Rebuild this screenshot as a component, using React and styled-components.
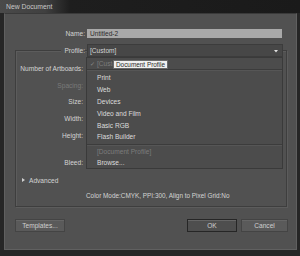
import React from 'react';
import styled, { createGlobalStyle } from 'styled-components';

const GlobalStyle = createGlobalStyle`
  html, body {
    margin: 0;
    padding: 0;
    background: #1e1e1e;
  }
  body {
    font-family: "Liberation Sans", Arial, sans-serif;
  }
`;

const Window = styled.div`
  width: 300px;
  height: 256px;
  background: #262626;
  display: flex;
  flex-direction: column;
  overflow: hidden;
  position: relative;
`;

const TitleBar = styled.div`
  height: 13px;
  flex: none;
  display: flex;
  align-items: center;
  padding-left: 6px;
  background: linear-gradient(90deg, #4a4a4a 0px, #404040 45px, #1e1e1e 70px, #1a1a1a 100%);
  color: #c8c8c8;
  font-size: 6.8px;
`;

const Body = styled.div`
  flex: 1;
  margin: 0 3px 6px 4px;
  background: #515151;
  border: 1px solid #606060;
  border-top-color: #3a3a3a;
  display: flex;
  flex-direction: column;
`;

const Label = styled.div`
  width: ${(p) => p.$width}px;
  flex: none;
  text-align: right;
  font-size: 6.6px;
  color: ${(p) => (p.$dim ? '#7a7a7a' : '#d4d4d4')};
  white-space: nowrap;
`;

const NameRow = styled.div`
  display: flex;
  align-items: center;
  height: 9px;
  margin-top: 15px;
`;

const TextInput = styled.div`
  margin-left: 2px;
  width: 195px;
  height: 9px;
  background: #a9a9a9;
  color: #2c2c2c;
  font-size: 6.6px;
  line-height: 9px;
  padding-left: 3px;
  box-sizing: border-box;
`;

const Group = styled.div`
  margin: 12px 0 0 10px;
  width: 272px;
  box-sizing: border-box;
  border: 1px solid #3e3e3e;
  box-shadow: inset 1px 1px 0 #5c5c5c, 1px 1px 0 #5c5c5c;
  padding-bottom: 6px;
`;

const GroupHeader = styled.div`
  display: flex;
  align-items: center;
  height: 13px;
  margin-top: -7px;
`;

const Legend = styled.div`
  width: 69px;
  flex: none;
  display: flex;
  justify-content: flex-end;
`;

const LegendText = styled.span`
  background: #515151;
  padding-left: 3px;
  font-size: 6.6px;
  color: #d4d4d4;
`;

const Select = styled.div`
  position: relative;
  margin-left: 2px;
  width: 196px;
  height: 13px;
  background: #474747;
  box-sizing: border-box;
  border: 1px solid #3c3c3c;
  display: flex;
  align-items: center;
  padding-left: 2px;
  font-size: 6.6px;
  color: #d4d4d4;
`;

const Arrow = styled.svg`
  position: absolute;
  right: 4px;
  top: 4px;
`;

const Menu = styled.div`
  position: absolute;
  left: -2px;
  top: 12px;
  width: 197px;
  background: #4c4c4c;
  border: 1px solid #3a3a3a;
  box-sizing: border-box;
  display: flex;
  flex-direction: column;
  z-index: 5;
`;

const MenuItem = styled.div`
  position: relative;
  height: ${(p) => p.$h || 11.9}px;
  display: flex;
  align-items: center;
  padding-left: 10px;
  font-size: 6.6px;
  color: ${(p) => (p.$dim ? '#7c7c7c' : '#dcdcdc')};
  white-space: nowrap;
`;

const Check = styled.span`
  position: absolute;
  left: 3px;
  font-size: 6px;
  color: #8a8a8a;
`;

const Separator = styled.div`
  height: ${(p) => p.$h}px;
  display: flex;
  align-items: center;
  &::after {
    content: '';
    flex: 1;
    height: 1px;
    background: #3c3c3c;
    box-shadow: 0 1px 0 #565656;
  }
`;

const Tooltip = styled.div`
  position: absolute;
  left: 25px;
  top: 15px;
  width: 55px;
  height: 9px;
  box-sizing: border-box;
  background: #f0f0f0;
  border: 1px solid #6a6a6a;
  color: #2a2a2a;
  font-size: 6.4px;
  display: flex;
  align-items: center;
  justify-content: center;
  white-space: nowrap;
  z-index: 6;
`;

const Row = styled.div`
  display: flex;
  align-items: center;
  height: 10px;
  margin-top: ${(p) => p.$top}px;
`;

const Advanced = styled.div`
  display: flex;
  align-items: center;
  gap: 4px;
  height: 10px;
  margin-top: 8px;
  padding-left: 6px;
  font-size: 6.6px;
  color: #d4d4d4;
`;

const Summary = styled.div`
  height: 10px;
  margin-top: 5px;
  padding-left: 70px;
  display: flex;
  align-items: center;
  font-size: 6.4px;
  color: #d4d4d4;
  white-space: nowrap;
`;

const Buttons = styled.div`
  display: flex;
  justify-content: space-between;
  margin: 12px 8px 0 10px;
`;

const ButtonGroup = styled.div`
  display: flex;
  gap: 4px;
`;

const Button = styled.div`
  width: ${(p) => p.$w}px;
  height: 13px;
  box-sizing: border-box;
  background: ${(p) => (p.$primary ? '#4e4e4e' : '#5a5a5a')};
  border: 1px solid ${(p) => (p.$primary ? '#262626' : '#444')};
  box-shadow: inset 0 1px 0 #666;
  display: flex;
  align-items: center;
  justify-content: center;
  font-size: 6.6px;
  color: #cfcfcf;
`;

const menuItems = ['Print', 'Web', 'Devices', 'Video and Film', 'Basic RGB', 'Flash Builder'];

const fields = [
  { label: 'Number of Artboards:', top: 6 },
  { label: 'Spacing:', top: 7, dim: true },
  { label: 'Size:', top: 6.5 },
  { label: 'Width:', top: 6.5 },
  { label: 'Height:', top: 7 },
  { label: 'Bleed:', top: 17 },
];

export default function App() {
  return (
    <Window>
      <GlobalStyle />
      <TitleBar>New Document</TitleBar>
      <Body>
        <NameRow>
          <Label $width={80}>Name:</Label>
          <TextInput>Untitled-2</TextInput>
        </NameRow>
        <Group>
          <GroupHeader>
            <Legend>
              <LegendText>Profile:</LegendText>
            </Legend>
            <Select>
              [Custom]
              <Arrow width="4" height="4" viewBox="0 0 4 4">
                <path d="M0 1 L4 1 L2 3.5 Z" fill="#e0e0e0" />
              </Arrow>
              <Menu>
                <MenuItem $h={10} $dim>
                  <Check>✓</Check>[Custom]
                </MenuItem>
                <Separator $h={3.5} />
                {menuItems.map((m) => (
                  <MenuItem key={m}>{m}</MenuItem>
                ))}
                <Separator $h={3} />
                <MenuItem $dim>[Document Profile]</MenuItem>
                <MenuItem $h={10.5}>Browse...</MenuItem>
              </Menu>
              <Tooltip>Document Profile</Tooltip>
            </Select>
          </GroupHeader>
          {fields.map((f) => (
            <Row key={f.label} $top={f.top}>
              <Label $width={67} $dim={f.dim}>
                {f.label}
              </Label>
            </Row>
          ))}
          <Advanced>
            <svg width="3" height="4" viewBox="0 0 3 4">
              <path d="M0 0 L3 2 L0 4 Z" fill="#cfcfcf" />
            </svg>
            Advanced
          </Advanced>
          <Summary>Color Mode:CMYK, PPI:300, Align to Pixel Grid:No</Summary>
        </Group>
        <Buttons>
          <Button $w={50}>Templates...</Button>
          <ButtonGroup>
            <Button $w={50} $primary>
              OK
            </Button>
            <Button $w={47}>Cancel</Button>
          </ButtonGroup>
        </Buttons>
      </Body>
    </Window>
  );
}
